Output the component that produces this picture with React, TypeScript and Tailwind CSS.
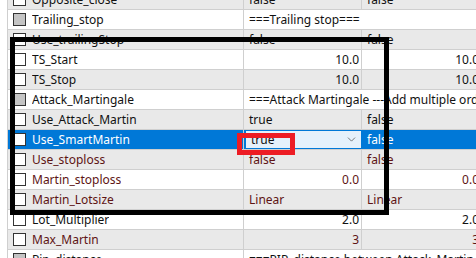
import { ChevronDown } from 'lucide-react'

type Row = {
  name: string
  value?: string
  value2?: string
  header?: string
  numeric?: boolean
  tone?: 'red'
  selected?: boolean
}

const ROWS: Row[] = [
  { name: 'Opposite_close', value: 'false', value2: 'false' },
  { name: 'Trailing_stop', header: '===Trailing stop===' },
  { name: 'Use_trailingStop', value: 'false', value2: 'false' },
  { name: 'TS_Start', value: '10.0', value2: '10.0', numeric: true },
  { name: 'TS_Stop', value: '10.0', value2: '10.0', numeric: true },
  { name: 'Attack_Martingale', header: '===Attack Martingale ---Add multiple orders' },
  { name: 'Use_Attack_Martin', value: 'true', value2: 'false' },
  { name: 'Use_SmartMartin', value: 'true', value2: 'false', selected: true },
  { name: 'Use_stoploss', value: 'false', value2: 'false', tone: 'red' },
  { name: 'Martin_stoploss', value: '0.0', value2: '0.0', numeric: true, tone: 'red' },
  { name: 'Martin_Lotsize', value: 'Linear', value2: 'Linear', tone: 'red' },
  { name: 'Lot_Multiplier', value: '2.0', value2: '2.0', numeric: true },
  { name: 'Max_Martin', value: '3', value2: '3', numeric: true, tone: 'red' },
  { name: 'Pip_distance', header: '===PIP_distance between Attack_Martin' },
]

function CheckBox({ filled }: { filled: boolean }) {
  return (
    <span
      className={`w-[13px] h-[13px] shrink-0 border border-[#333333] ${filled ? 'bg-[#c4c4c4]' : 'bg-white'}`}
    />
  )
}

function InputRow({ row, index }: { row: Row; index: number }) {
  const gray = index % 2 === 0
  const bg = row.selected ? 'bg-white' : gray ? 'bg-[#e9e9e9]' : 'bg-white'
  const ink = row.tone === 'red' ? 'text-[#5e1414]' : 'text-[#111111]'

  return (
    <div className={`flex h-5 border-b border-[#cfcfcf] ${bg}`}>
      <div
        className={`w-[236px] shrink-0 flex items-center gap-[6px] pl-[5px] border-r border-[#cfcfcf] ${
          row.selected ? 'bg-[#0078d7] text-white' : ink
        }`}
      >
        <CheckBox filled={!!row.header} />
        <span className="truncate">{row.name}</span>
      </div>

      {row.header ? (
        <div className="flex-1 flex items-center pl-[5px] whitespace-nowrap text-[#111111] bg-white">
          {row.header}
        </div>
      ) : (
        <>
          {row.selected ? (
            <div className="w-[118px] shrink-0 flex items-center justify-between pl-[5px] pr-[3px] border border-[#0078d7] border-l-2 bg-[#e5f1fb] text-[#111111]">
              <span>{row.value}</span>
              <ChevronDown size={13} strokeWidth={1.3} className="text-[#444444]" />
            </div>
          ) : (
            <div
              className={`w-[118px] shrink-0 flex items-center px-[5px] pr-[2px] border-r border-[#cfcfcf] ${ink} ${
                row.numeric ? 'justify-end' : ''
              }`}
            >
              {row.value}
            </div>
          )}
          <div
            className={`w-[120px] shrink-0 flex items-center px-[5px] pr-[3px] ${
              row.selected ? 'bg-[#0078d7] text-white' : ink
            } ${row.numeric ? 'justify-end' : ''}`}
          >
            {row.value2}
          </div>
        </>
      )}
    </div>
  )
}

export default function App() {
  return (
    <div className="relative w-[476px] h-[258px] overflow-hidden bg-white text-[12px] leading-[19px] font-['Noto_Sans','Liberation_Sans',sans-serif]">
      <div className="flex">
        <div className="w-[8px] shrink-0 border-r border-[#cfcfcf] bg-white" />
        <div className="-mt-[10px] w-[474px] shrink-0">
          {ROWS.map((row, i) => (
            <InputRow key={row.name} row={row} index={i} />
          ))}
        </div>
      </div>

      {/* annotation boxes drawn over the grid */}
      <div className="absolute left-[10px] top-[37px] w-[379px] h-[178px] border-[5px] border-black pointer-events-none" />
      <div className="absolute left-[237px] top-[133px] w-[58px] h-[22px] border-[5px] border-[#ed1c24] pointer-events-none" />
    </div>
  )
}
